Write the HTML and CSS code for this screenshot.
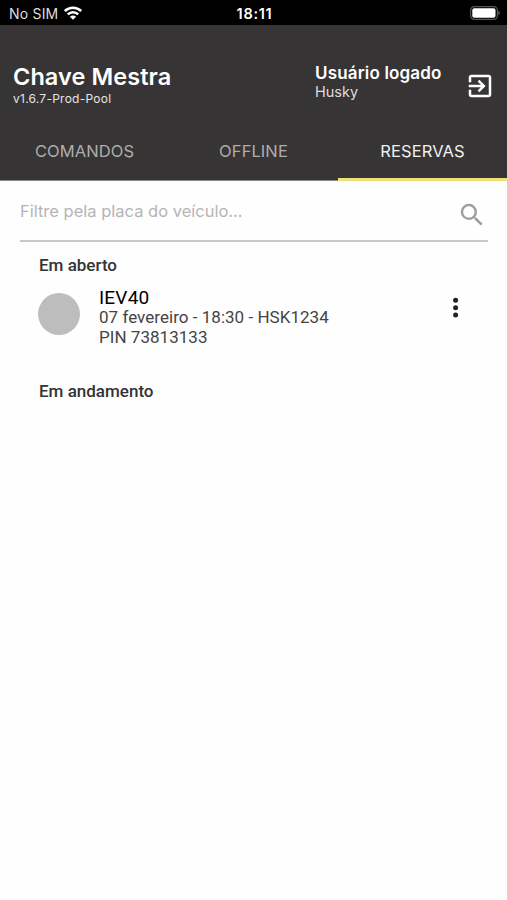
FILE: index.html
```html
<!DOCTYPE html>
<html lang="pt-BR">
  <head>
    <meta charset="UTF-8" />
    <meta name="viewport" content="width=device-width, initial-scale=1.0" />
    <title>Chave Mestra</title>
    <link rel="stylesheet" href="styles.css">
  </head>
  <body>
    <div class="status-bar">
      <div class="carrier">
        <span>No SIM</span>
        <svg class="wifi" viewBox="0 0 18 14" width="18" height="14">
          <g fill="none" stroke="#fff" stroke-width="2.6">
            <path d="M0.8 5.1a11.6 11.6 0 0 1 16.4 0" />
            <path d="M3.8 8.4a7.3 7.3 0 0 1 10.4 0" />
          </g>
          <path d="M9 13.8L5.9 10.7a4.4 4.4 0 0 1 6.2 0z" fill="#fff" />
        </svg>
      </div>
      <span class="clock">18:11</span>
      <svg class="battery" viewBox="0 0 30 14" width="30" height="14">
        <rect x="0.6" y="0.6" width="26.8" height="12.8" rx="3.8" fill="none" stroke="#555" stroke-width="1.2" />
        <rect x="2.3" y="2.3" width="23.2" height="9.4" rx="2" fill="#fff" />
        <path d="M28.4 4.8a2.4 2.4 0 0 1 0 4.4z" fill="#666" />
      </svg>
    </div>

    <header class="header">
      <div class="header-top">
        <div class="brand">
          <h1>Chave Mestra</h1>
          <p class="version">v1.6.7-Prod-Pool</p>
        </div>
        <div class="user">
          <p class="user-label">Usuário logado</p>
          <p class="user-name">Husky</p>
        </div>
        <button class="logout" type="button" aria-label="Sair">
          <svg viewBox="0 0 24 24" width="30" height="30">
            <path fill="#fff" d="M10.09 15.59L11.5 17l5-5-5-5-1.41 1.41L12.67 11H3v2h9.67l-2.58 2.59zM19 3H5c-1.11 0-2 .9-2 2v4h2V5h14v14H5v-4H3v4c0 1.1.89 2 2 2h14c1.1 0 2-.9 2-2V5c0-1.1-.9-2-2-2z" />
          </svg>
        </button>
      </div>
      <nav class="tabs">
        <a class="tab">COMANDOS</a>
        <a class="tab">OFFLINE</a>
        <a class="tab active">RESERVAS</a>
      </nav>
    </header>

    <main>
      <form class="search">
        <input type="text" placeholder="Filtre pela placa do veículo..." />
        <svg viewBox="0 0 24 24" width="30" height="30">
          <path fill="#9e9e9e" d="M15.5 14h-.79l-.28-.27A6.47 6.47 0 0 0 16 9.5 6.5 6.5 0 1 0 9.5 16c1.61 0 3.09-.59 4.23-1.57l.27.28v.79l5 4.99L20.49 19l-4.99-5zm-6 0C7.01 14 5 11.99 5 9.5S7.01 5 9.5 5 14 7.01 14 9.5 11.99 14 9.5 14z" />
        </svg>
      </form>

      <h2 class="section-open">Em aberto</h2>
      <div class="booking">
        <div class="avatar"></div>
        <div class="booking-info">
          <p class="code">IEV40</p>
          <p class="detail">07 fevereiro - 18:30 - HSK1234</p>
          <p class="detail">PIN 73813133</p>
        </div>
        <svg class="more" viewBox="0 0 6 22" width="6" height="22">
          <circle cx="2.6" cy="3.3" r="2.5" />
          <circle cx="2.6" cy="10.7" r="2.5" />
          <circle cx="2.6" cy="18" r="2.5" />
        </svg>
      </div>
      <h2 class="section-progress">Em andamento</h2>
    </main>
  </body>
</html>
```

FILE: styles.css
```css
* {
  box-sizing: border-box;
}
body {
  margin: 0;
  min-height: 900px;
  background-color: #fefefe;
  font-family: Roboto, sans-serif;
  color: #333;
}
h1,
h2,
p {
  margin: 0;
}
svg {
  display: block;
}
.status-bar {
  display: grid;
  grid-template-columns: 1fr auto 1fr;
  align-items: center;
  height: 25px;
  padding: 2px 7px 0 9px;
  background-color: #000;
  color: #fff;
  font-family: Inter, sans-serif;
  font-size: 14px;
  line-height: 23px;
}
.carrier {
  display: flex;
  align-items: center;
  gap: 6px;
  letter-spacing: 0.2px;
  color: #ddd;
}
.wifi {
  margin-top: -2px;
}
.clock {
  font-size: 14.5px;
  font-weight: 600;
  letter-spacing: 0.7px;
}
.battery {
  justify-self: end;
  margin-top: -2px;
}
.header {
  display: flex;
  flex-direction: column;
  height: 156px;
  background-color: #373435;
  color: #fff;
  font-family: Inter, sans-serif;
}
.header-top {
  display: flex;
  height: 97px;
  padding-left: 13px;
}
.brand {
  width: 302px;
  padding-top: 38px;
}
h1 {
  font-size: 23.5px;
  font-weight: 600;
  letter-spacing: 0.08px;
  line-height: 28px;
}
.version {
  font-size: 12px;
  letter-spacing: 0.25px;
  line-height: 16px;
  color: #e4e4e4;
}
.user {
  width: 150px;
  padding-top: 38px;
}
.user-label {
  font-size: 17px;
  font-weight: 600;
  letter-spacing: 0.17px;
  line-height: 20px;
}
.user-name {
  font-size: 14.5px;
  line-height: 18px;
  color: #ddd;
}
.logout {
  margin-top: 46px;
  padding: 0;
  width: 30px;
  height: 30px;
  border: none;
  background: none;
  cursor: pointer;
}
.tabs {
  display: grid;
  grid-template-columns: repeat(3, 1fr);
  height: 59px;
}
.tab {
  padding-top: 17px;
  border-bottom: 1px solid #8a8889;
  font-size: 16.5px;
  letter-spacing: 0.08px;
  line-height: 24px;
  text-align: center;
  color: #aeadad;
}
.tab.active {
  border-bottom: 3px solid #f0e07a;
  color: #f0f0f0;
}
.search {
  display: flex;
  height: 61px;
  margin: 0 19px 0 20px;
  border-bottom: 2px solid #c8c8c8;
}
.search input {
  flex: 1;
  height: 24px;
  margin-top: 18px;
  padding: 0;
  border: none;
  outline: none;
  background: none;
  font-family: Inter, sans-serif;
  font-size: 16.5px;
}
.search input::placeholder {
  color: #b5b5b5;
}
.search svg {
  margin: 19px 1px 0 0;
}
h2 {
  padding-left: 39px;
  font-size: 17px;
  font-weight: 500;
  line-height: 20px;
}
.section-open {
  margin-top: 13px;
}
.booking {
  display: flex;
  height: 74px;
  padding: 14px 48px 0 38px;
}
.avatar {
  width: 42px;
  height: 42px;
  margin-top: 4px;
  border-radius: 50%;
  background-color: #bdbdbd;
}
.booking-info {
  flex: 1;
  margin-left: 19px;
}
.code {
  font-size: 19px;
  letter-spacing: 0.2px;
  line-height: 18px;
  color: #000;
}
.detail {
  font-size: 17px;
  letter-spacing: 0.03px;
  line-height: 20px;
  color: #444;
}
.more {
  margin-top: 8px;
  fill: #222;
}
.section-progress {
  margin-top: 32px;
}
```
